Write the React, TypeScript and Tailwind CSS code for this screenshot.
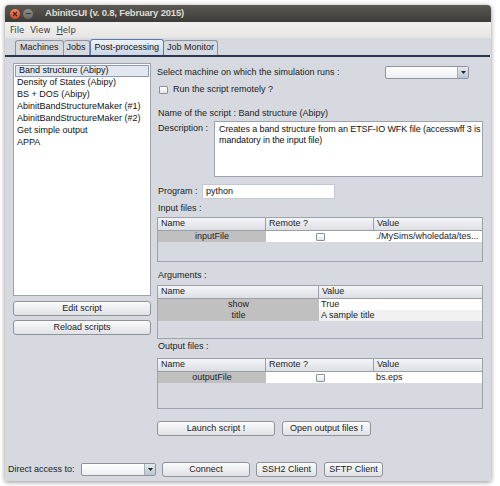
import React from "react";

const font = { fontFamily: '"Liberation Sans", Arial, sans-serif' };

function Btn({ children, w, className = "" }: { children: React.ReactNode; w: string; className?: string }) {
  return (
    <div
      className={`${w} h-[15px] flex items-center justify-center rounded-[3px] border border-[#8e9299] bg-gradient-to-b from-[#fbfbfc] to-[#dfe1e5] text-[9px] text-[#222] ${className}`}
    >
      {children}
    </div>
  );
}

function Combo({ w }: { w: string }) {
  return (
    <div className={`${w} h-[13px] flex rounded-[2px] border border-[#8e9299] bg-gradient-to-b from-white to-[#eceef1]`}>
      <div className="flex-1" />
      <div className="w-[11px] border-l border-[#a9aeb6] bg-gradient-to-b from-[#e4e9f1] to-[#b9c4d4] flex items-center justify-center">
        <svg width="5" height="3" viewBox="0 0 5 3">
          <path d="M0 0 L5 0 L2.5 3 Z" fill="#222" />
        </svg>
      </div>
    </div>
  );
}

function Check() {
  return <div className="w-[9px] h-[8px] border border-[#8e9299] rounded-[1px] bg-gradient-to-b from-white to-[#e2e4e8]" />;
}

function HeaderCell({ children, w, last }: { children: React.ReactNode; w: string; last?: boolean }) {
  return (
    <div
      className={`${w} h-[13px] flex items-center pl-[3px] text-[9px] text-[#222] bg-gradient-to-b from-[#f4f5f7] to-[#dcdfe4] border-b border-[#9a9ea6] ${last ? "" : "border-r"}`}
    >
      {children}
    </div>
  );
}

export default function App() {
  const items = [
    "Band structure (Abipy)",
    "Density of States (Abipy)",
    "BS + DOS (Abipy)",
    "AbinitBandStructureMaker (#1)",
    "AbinitBandStructureMaker (#2)",
    "Get simple output",
    "APPA",
  ];
  return (
    <div className="w-[500px] h-[486px] bg-white pt-[5px] pl-[5px]" style={font}>
      <div className="w-[486px] h-[476px] flex flex-col bg-[#d6d9df] shadow-[0_1px_5px_rgba(0,0,0,0.45)] rounded-t-[4px] overflow-hidden">
        {/* title bar */}
        <div className="h-[17px] flex items-center bg-gradient-to-b from-[#5a5954] to-[#3d3c38] pl-[5px]">
          <div className="w-[10px] h-[10px] rounded-full bg-gradient-to-b from-[#f38a5c] to-[#d9461d] flex items-center justify-center">
            <svg width="6" height="6" viewBox="0 0 6 6">
              <path d="M1 1 L5 5 M5 1 L1 5" stroke="#3b2a22" strokeWidth="1.2" />
            </svg>
          </div>
          <div className="w-[10px] h-[10px] rounded-full bg-gradient-to-b from-[#8d8c87] to-[#6a6964] ml-[3px] flex items-center justify-center">
            <div className="w-[5px] h-[1.5px] bg-[#3a3935]" />
          </div>
          <div className="ml-[12px] font-bold text-[#dfdbd2] text-[9.5px] tracking-[-0.2px]">
            AbinitGUI (v. 0.8, February 2015)
          </div>
        </div>
        {/* menu bar */}
        <div className="h-[16px] flex items-center gap-[6px] pl-[5px] bg-gradient-to-b from-[#f2f1f0] to-[#e6e5e3] text-[#3c3c3c]" style={{ fontFamily: '"DejaVu Sans", sans-serif', fontSize: "8.5px" }}>
          <span>File</span>
          <span>View</span>
          <span><span className="underline">H</span>elp</span>
        </div>
        {/* tabs */}
        <div className="h-[19px] flex items-end pl-[10px] border-b-[2px] border-[#2a3650] mr-[1px]">
          <div className="h-[15px] px-[4px] flex items-center border border-b-0 border-[#8e9299] rounded-t-[3px] text-[9px] text-[#222]">Machines</div>
          <div className="h-[15px] px-[3px] flex items-center border border-b-0 border-l-0 border-[#8e9299] rounded-t-[3px] text-[9px] text-[#222]">Jobs</div>
          <div className="h-[16px] px-[4px] flex items-center border border-b-0 border-[#5d7aa8] rounded-t-[3px] bg-gradient-to-b from-[#eef2f7] to-[#c9d5e6] text-[9px] text-[#111]">Post-processing</div>
          <div className="h-[15px] px-[3px] flex items-center border border-b-0 border-l-0 border-[#8e9299] rounded-t-[3px] text-[9px] text-[#222]">Job Monitor</div>
        </div>
        {/* body */}
        <div className="flex-1 flex flex-col">
          <div className="flex pt-[6px] pl-[8px]">
            {/* left */}
            <div className="w-[138px] flex flex-col">
              <div className="h-[233px] bg-white border border-[#9ea3ab] pt-[1px]">
                {items.map((t, i) => (
                  <div
                    key={t}
                    className={`h-[12px] flex items-center pl-[3px] text-[9px] text-[#111] ${i === 0 ? "bg-[#e3e8f0] border border-[#8a9bb8] mx-[1px] pl-[2px]" : ""}`}
                  >
                    {t}
                  </div>
                ))}
              </div>
              <Btn w="w-[138px]" className="mt-[5px]">Edit script</Btn>
              <Btn w="w-[138px]" className="mt-[4px]">Reload scripts</Btn>
            </div>
            {/* right */}
            <div className="flex-1 flex flex-col pl-[6px] pr-[7px] text-[9px] text-[#222]">
              <div className="h-[13px] mt-[3px] flex items-center">
                <span className="w-[228px]">Select machine on which the simulation runs :</span>
                <Combo w="w-[84px]" />
              </div>
              <div className="h-[10px] mt-[6px] flex items-center gap-[5px] pl-[2px]">
                <Check />
                <span>Run the script remotely ?</span>
              </div>
              <div className="h-[12px] mt-[13px] flex items-center pl-[1px]">Name of the script : Band structure (Abipy)</div>
              <div className="flex mt-[1px] pl-[1px]">
                <span className="w-[56px] leading-[12px] pt-[1px]">Description :</span>
                <div className="w-[269px] h-[56px] bg-white border border-[#9ea3ab] pl-[4px] pr-0 pt-[2px] leading-[11px] text-[#111] tracking-[-0.1px]">
                  Creates a band structure from an ETSF-IO WFK file (accesswff 3 is mandatory in the input file)
                </div>
              </div>
              <div className="flex items-center mt-[7px] pl-[1px] h-[15px]">
                <span className="w-[44px]">Program :</span>
                <div className="w-[133px] h-[15px] bg-white border border-[#c4c8cf] flex items-center pl-[3px] text-[#111]">python</div>
              </div>
              <div className="h-[12px] mt-[4px] flex items-center pl-[1px]">Input files :</div>
              <div className="w-[326px] h-[45px] mt-[2px] border border-[#9ea3ab] flex flex-col">
                <div className="flex">
                  <HeaderCell w="w-[108px]">Name</HeaderCell>
                  <HeaderCell w="w-[108px]">Remote ?</HeaderCell>
                  <HeaderCell w="flex-1" last>Value</HeaderCell>
                </div>
                <div className="flex h-[11px]">
                  <div className="w-[108px] bg-[#c0c0c0] flex items-center justify-center">inputFile</div>
                  <div className="w-[108px] bg-white flex items-center justify-center"><Check /></div>
                  <div className="flex-1 bg-white flex items-center pl-[2px] overflow-hidden whitespace-nowrap">./MySims/wholedata/tes...</div>
                </div>
              </div>
              <div className="h-[12px] mt-[8px] flex items-center pl-[1px]">Arguments :</div>
              <div className="w-[326px] h-[54px] mt-[3px] border border-[#9ea3ab] flex flex-col">
                <div className="flex">
                  <HeaderCell w="w-[161px]">Name</HeaderCell>
                  <HeaderCell w="flex-1" last>Value</HeaderCell>
                </div>
                <div className="flex h-[11px]">
                  <div className="w-[161px] bg-[#c0c0c0] flex items-center justify-center">show</div>
                  <div className="flex-1 bg-white flex items-center pl-[2px]">True</div>
                </div>
                <div className="flex h-[11px]">
                  <div className="w-[161px] bg-[#c0c0c0] flex items-center justify-center">title</div>
                  <div className="flex-1 bg-[#f1f1f1] flex items-center pl-[2px]">A sample title</div>
                </div>
              </div>
              <div className="h-[12px] mt-[2px] flex items-center pl-[1px]">Output files :</div>
              <div className="w-[326px] h-[51px] mt-[5px] border border-[#9ea3ab] flex flex-col">
                <div className="flex">
                  <HeaderCell w="w-[108px]">Name</HeaderCell>
                  <HeaderCell w="w-[108px]">Remote ?</HeaderCell>
                  <HeaderCell w="flex-1" last>Value</HeaderCell>
                </div>
                <div className="flex h-[11px]">
                  <div className="w-[108px] bg-[#c0c0c0] flex items-center justify-center">outputFile</div>
                  <div className="w-[108px] bg-white flex items-center justify-center"><Check /></div>
                  <div className="flex-1 bg-white flex items-center pl-[2px]">bs.eps</div>
                </div>
              </div>
              <div className="flex gap-[7px] mt-[12px]">
                <Btn w="w-[118px]">Launch script !</Btn>
                <Btn w="w-[89px]">Open output files !</Btn>
              </div>
            </div>
          </div>
          {/* bottom bar */}
          <div className="flex items-center mt-[26px] pl-[3px] text-[9px] text-[#222]">
            <span className="w-[73px]">Direct access to:</span>
            <Combo w="w-[75px]" />
            <Btn w="w-[88px]" className="ml-[6px]">Connect</Btn>
            <Btn w="w-[61px]" className="ml-[6px]">SSH2 Client</Btn>
            <Btn w="w-[59px]" className="ml-[7px]">SFTP Client</Btn>
          </div>
        </div>
      </div>
    </div>
  );
}
